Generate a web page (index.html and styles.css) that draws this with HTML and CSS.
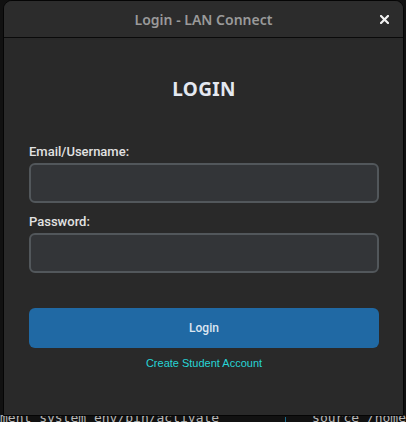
FILE: index.html
```html
<!DOCTYPE html>
<html>
<head>
<meta charset="utf-8">
<link rel="stylesheet" href="styles.css">
</head>
<body>
<div class="desktop">
  <div class="terminal">
    <div class="term-line"><span>ment system env/bin/activate</span><span class="cursor"></span><span class="src">source /home</span></div>
  </div>
  <div class="window">
    <div class="titlebar">
      <span class="title">Login - LAN Connect</span>
      <svg class="close" width="9" height="9" viewBox="0 0 9 9"><path d="M1 1L8 8M8 1L1 8" stroke="#f2f2f2" stroke-width="2.2" stroke-linecap="square" fill="none"/></svg>
    </div>
    <div class="content">
      <h1 class="heading">LOGIN</h1>
      <div class="form">
        <label class="label">Email/Username:</label>
        <div class="input"></div>
        <label class="label">Password:</label>
        <div class="input"></div>
        <button class="btn">Login</button>
        <a class="link">Create Student Account</a>
      </div>
    </div>
  </div>
</div>
</body>
</html>
```

FILE: styles.css
```css
html, body {
  margin: 0;
  padding: 0;
  background: #0c0c0c;
}
.desktop {
  position: relative;
  width: 406px;
  height: 422px;
  overflow: hidden;
  background: #111111;
}
.terminal {
  position: absolute;
  left: 0;
  top: 410px;
  width: 406px;
  font-family: "DejaVu Sans Mono", monospace;
  font-size: 13px;
  color: #b8b8b8;
}
.term-line {
  display: flex;
  white-space: pre;
}
.cursor {
  display: inline-block;
  width: 4px;
  height: 10px;
  background: #1a6b8c;
  margin-left: 66px;
  margin-top: 7px;
}
.src {
  margin-left: 26px;
}
.window {
  position: absolute;
  left: 3px;
  top: 0;
  width: 399px;
  height: 414px;
  border: 1px solid #050505;
  border-radius: 9px 9px 0 0;
  background: #292929;
  display: flex;
  flex-direction: column;
  overflow: hidden;
}
.titlebar {
  height: 36px;
  flex: none;
  border-bottom: 1px solid #0a0a0a;
  background: #2c2c2c;
  display: flex;
  align-items: center;
  justify-content: center;
  position: relative;
}
.title {
  font-family: "Noto Sans", sans-serif;
  font-weight: 600;
  font-size: 14px;
  color: #9a9a9a;
}
.close {
  position: absolute;
  right: 14px;
  top: 14px;
}
.content {
  padding: 0 24px 0 25px;
  display: flex;
  flex-direction: column;
}
.heading {
  margin: 38px 0 0;
  text-align: center;
  font-family: "Noto Sans", sans-serif;
  font-weight: 700;
  font-size: 19px;
  line-height: 26px;
  color: #e4e8f0;
  letter-spacing: 0.3px;
}
.form {
  display: flex;
  flex-direction: column;
  margin-top: 42px;
}
.label {
  font-family: Roboto, sans-serif;
  font-weight: 500;
  font-size: 13px;
  line-height: 16px;
  color: #e2e2e2;
  margin-bottom: 3px;
}
.input {
  height: 36px;
  border: 2px solid #52575b;
  border-radius: 6px;
  background: #333538;
  margin-bottom: 11px;
}
.btn {
  margin-top: 24px;
  height: 40px;
  border: none;
  border-radius: 6px;
  background: #2069a4;
  color: #dce6f2;
  font-family: Roboto, sans-serif;
  font-weight: 500;
  font-size: 12px;
  padding: 0;
}
.link {
  margin-top: 8px;
  text-align: center;
  font-family: "Liberation Sans", Arial, sans-serif;
  font-size: 11px;
  line-height: 14px;
  color: #27d4d6;
}
```
